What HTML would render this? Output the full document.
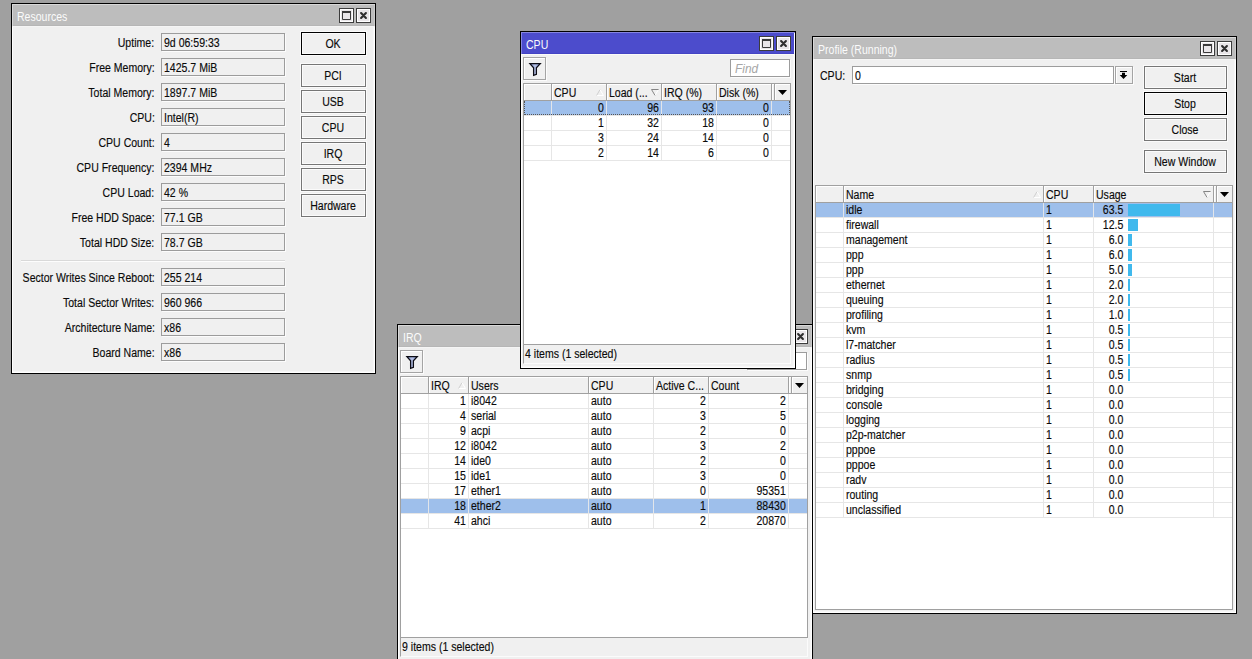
<!DOCTYPE html>
<html><head><meta charset="utf-8"><title>WinBox</title>
<style>
html,body{margin:0;padding:0}
body{width:1252px;height:659px;overflow:hidden;position:relative;background:#a0a0a0;font-family:"Liberation Sans",sans-serif;font-size:12.5px;color:#0a0a0a}
div,span.t,span.cw,svg.abs{position:absolute;box-sizing:border-box}
.t{line-height:15px;white-space:nowrap;transform:scaleX(0.843);-webkit-text-stroke:0.15px currentColor}
.t.l{transform-origin:0 50%}
.t.r{transform-origin:100% 50%}
.cw{width:0;height:15px;display:block}
.cw .t.c{left:0;top:0;transform:translateX(-50%) scaleX(0.843);transform-origin:50% 50%}
.win{background:#f0f0f0;border:1px solid #000;box-shadow:inset 1px 1px 0 #fff,inset -1px -1px 0 #fff,inset -2px -2px 0 #f7f7f7}
.tb.tbi{background:#bdbdbd;box-shadow:inset 1px 1px 0 #d8d8d8,inset -1px 0 0 #cbcbcb,inset 0 -1px 0 #b6b6b6}
.tb.tba{background:#4c4ccc;box-shadow:inset 1px 1px 0 #8585e0,inset -1px 0 0 #fff,inset 0 -1px 0 #4444c4}
.tt{color:#fbfbfb;-webkit-text-stroke:0}
.wb{border:1px solid #3c3c3c;background:#e9e6e9;box-shadow:inset 1px 1px 0 #fff,inset -1px -1px 0 #fff}
.wb svg{position:absolute;left:-1px;top:-1px}
.btn{border:1px solid #767676;background:#f0f0f0;box-shadow:inset 0 0 0 1px #fbfbfb,0 0 0 1px #fafafa}
.btn.def{border-color:#000}
.fld{border:1px solid #9c9c9c;background:#f0f0f0;box-shadow:1px 1px 0 #fcfcfc}
.fld.wh{background:#fff}
.tool{border:1px solid #a4a4a4;background:#f0f0f0;box-shadow:inset 1px 1px 0 #fff,1px 1px 0 #fcfcfc}
.tool svg{position:absolute;left:-1px;top:-1px}
.find{font-style:italic;color:#a6a6a6;-webkit-text-stroke:0}
.tbl{border:1px solid #a0a0a0;background:#fff}
.th{background:#f0f0f0;box-shadow:inset 0 1px 0 #fff,inset 1px 0 0 #fff}
</style></head>
<body>
<div class="win" style="left:11px;top:3px;width:365px;height:371px;"></div>
<div class="tb tbi" style="left:12px;top:4px;width:363px;height:22px;"></div>
<div style="left:12px;top:26px;width:363px;height:1px;background:#f5f5f5"></div>
<span class="t l tt" style="left:16.5px;top:10px;">Resources</span>
<div class="wb" style="left:356px;top:8px;width:15px;height:15px;"><svg width="15" height="15" viewBox="0 0 15 15"><path d="M5.1 5.1 L9.9 9.9 M9.9 5.1 L5.1 9.9" stroke="#2e2e2e" stroke-width="2.15" stroke-linecap="round" fill="none"/></svg></div>
<div class="wb" style="left:339px;top:8px;width:15px;height:15px;"><svg width="15" height="15" viewBox="0 0 15 15"><path d="M3.5 4 H11.5 V11.5 H3.5 Z" stroke="#3a3a3a" stroke-width="1" fill="none"/><rect x="3" y="3" width="9" height="2" fill="#3a3a3a"/></svg></div>
<span class="t r" style="right:1097.5px;top:36px;">Uptime:</span>
<div class="fld" style="left:161px;top:33px;width:124px;height:18px;"></div>
<span class="t l" style="left:164px;top:36px;">9d 06:59:33</span>
<span class="t r" style="right:1097.5px;top:61px;">Free Memory:</span>
<div class="fld" style="left:161px;top:58px;width:124px;height:18px;"></div>
<span class="t l" style="left:164px;top:61px;">1425.7 MiB</span>
<span class="t r" style="right:1097.5px;top:86px;">Total Memory:</span>
<div class="fld" style="left:161px;top:83px;width:124px;height:18px;"></div>
<span class="t l" style="left:164px;top:86px;">1897.7 MiB</span>
<span class="t r" style="right:1097.5px;top:111px;">CPU:</span>
<div class="fld" style="left:161px;top:108px;width:124px;height:18px;"></div>
<span class="t l" style="left:164px;top:111px;">Intel(R)</span>
<span class="t r" style="right:1097.5px;top:136px;">CPU Count:</span>
<div class="fld" style="left:161px;top:133px;width:124px;height:18px;"></div>
<span class="t l" style="left:164px;top:136px;">4</span>
<span class="t r" style="right:1097.5px;top:161px;">CPU Frequency:</span>
<div class="fld" style="left:161px;top:158px;width:124px;height:18px;"></div>
<span class="t l" style="left:164px;top:161px;">2394 MHz</span>
<span class="t r" style="right:1097.5px;top:186px;">CPU Load:</span>
<div class="fld" style="left:161px;top:183px;width:124px;height:18px;"></div>
<span class="t l" style="left:164px;top:186px;">42 %</span>
<span class="t r" style="right:1097.5px;top:211px;">Free HDD Space:</span>
<div class="fld" style="left:161px;top:208px;width:124px;height:18px;"></div>
<span class="t l" style="left:164px;top:211px;">77.1 GB</span>
<span class="t r" style="right:1097.5px;top:236px;">Total HDD Size:</span>
<div class="fld" style="left:161px;top:233px;width:124px;height:18px;"></div>
<span class="t l" style="left:164px;top:236px;">78.7 GB</span>
<div style="left:21px;top:260px;width:264px;height:1px;background:#d9d9d9"></div>
<div style="left:21px;top:261px;width:264px;height:1px;background:#fdfdfd"></div>
<span class="t r" style="right:1097.5px;top:271px;">Sector Writes Since Reboot:</span>
<div class="fld" style="left:161px;top:268px;width:124px;height:18px;"></div>
<span class="t l" style="left:164px;top:271px;">255 214</span>
<span class="t r" style="right:1097.5px;top:296px;">Total Sector Writes:</span>
<div class="fld" style="left:161px;top:293px;width:124px;height:18px;"></div>
<span class="t l" style="left:164px;top:296px;">960 966</span>
<span class="t r" style="right:1097.5px;top:321px;">Architecture Name:</span>
<div class="fld" style="left:161px;top:318px;width:124px;height:18px;"></div>
<span class="t l" style="left:164px;top:321px;">x86</span>
<span class="t r" style="right:1097.5px;top:346px;">Board Name:</span>
<div class="fld" style="left:161px;top:343px;width:124px;height:18px;"></div>
<span class="t l" style="left:164px;top:346px;">x86</span>
<div class="btn def" style="left:301px;top:32px;width:65px;height:23px;"></div>
<span class="cw" style="left:332.8px;top:37px"><span class="t c" style="">OK</span></span>
<div class="btn" style="left:301px;top:64px;width:65px;height:23px;"></div>
<span class="cw" style="left:332.8px;top:69px"><span class="t c" style="">PCI</span></span>
<div class="btn" style="left:301px;top:90px;width:65px;height:23px;"></div>
<span class="cw" style="left:332.8px;top:95px"><span class="t c" style="">USB</span></span>
<div class="btn" style="left:301px;top:116px;width:65px;height:23px;"></div>
<span class="cw" style="left:332.8px;top:121px"><span class="t c" style="">CPU</span></span>
<div class="btn" style="left:301px;top:142px;width:65px;height:23px;"></div>
<span class="cw" style="left:332.8px;top:147px"><span class="t c" style="">IRQ</span></span>
<div class="btn" style="left:301px;top:168px;width:65px;height:23px;"></div>
<span class="cw" style="left:332.8px;top:173px"><span class="t c" style="">RPS</span></span>
<div class="btn" style="left:301px;top:194px;width:65px;height:23px;"></div>
<span class="cw" style="left:332.8px;top:199px"><span class="t c" style="">Hardware</span></span>
<div class="win" style="left:397px;top:324px;width:416px;height:338px;"></div>
<div class="tb tbi" style="left:398px;top:325px;width:414px;height:22px;"></div>
<div style="left:398px;top:347px;width:414px;height:1px;background:#f5f5f5"></div>
<span class="t l tt" style="left:402.5px;top:331px;">IRQ</span>
<div class="wb" style="left:793px;top:329px;width:15px;height:15px;"><svg width="15" height="15" viewBox="0 0 15 15"><path d="M5.1 5.1 L9.9 9.9 M9.9 5.1 L5.1 9.9" stroke="#2e2e2e" stroke-width="2.15" stroke-linecap="round" fill="none"/></svg></div>
<div class="wb" style="left:776px;top:329px;width:15px;height:15px;"><svg width="15" height="15" viewBox="0 0 15 15"><path d="M3.5 4 H11.5 V11.5 H3.5 Z" stroke="#3a3a3a" stroke-width="1" fill="none"/><rect x="3" y="3" width="9" height="2" fill="#3a3a3a"/></svg></div>
<div class="tool" style="left:400px;top:350px;width:23px;height:23px;"><svg width="23" height="23" viewBox="0 0 23 23"><defs><linearGradient id="fg" x1="0" x2="1" y1="0" y2="0"><stop offset="0" stop-color="#7a8cc6"/><stop offset=".5" stop-color="#b6c2e6"/><stop offset="1" stop-color="#8494cc"/></linearGradient></defs><path d="M6.9 6.6 H17.3 L13.4 10.8 V17.3 L10.6 18.4 V10.8 Z" fill="url(#fg)" stroke="#0c0c14" stroke-width="1.25" stroke-linejoin="miter"/></svg></div>
<div class="fld wh" style="left:747px;top:352px;width:60px;height:18px;"></div>
<span class="t l find" style="left:751.8px;top:355px;transform:scaleX(.95)">Find</span>
<div class="tbl" style="left:400px;top:376px;width:408px;height:262px;"></div>
<div class="th" style="left:401px;top:377px;width:406px;height:16px;"></div>
<div style="left:401px;top:393px;width:406px;height:1px;background:#a0a0a0"></div>
<div style="left:428px;top:377px;width:1px;height:16px;background:#a0a0a0"></div>
<div style="left:429px;top:377px;width:1px;height:16px;background:#fff"></div>
<div style="left:468px;top:377px;width:1px;height:16px;background:#a0a0a0"></div>
<div style="left:469px;top:377px;width:1px;height:16px;background:#fff"></div>
<div style="left:588px;top:377px;width:1px;height:16px;background:#a0a0a0"></div>
<div style="left:589px;top:377px;width:1px;height:16px;background:#fff"></div>
<div style="left:653px;top:377px;width:1px;height:16px;background:#a0a0a0"></div>
<div style="left:654px;top:377px;width:1px;height:16px;background:#fff"></div>
<div style="left:708px;top:377px;width:1px;height:16px;background:#a0a0a0"></div>
<div style="left:709px;top:377px;width:1px;height:16px;background:#fff"></div>
<div style="left:788px;top:377px;width:1px;height:16px;background:#a0a0a0"></div>
<div style="left:789px;top:377px;width:1px;height:16px;background:#fff"></div>
<div style="left:791px;top:377px;width:1px;height:16px;background:#a0a0a0"></div>
<div style="left:792px;top:377px;width:1px;height:16px;background:#fff"></div>
<svg class="abs" style="left:794.5px;top:383px" width="9" height="5" viewBox="0 0 9 5"><path d="M0 0 H9 L4.5 5 Z" fill="#000"/></svg>
<span class="t l" style="left:431px;top:379px;">IRQ</span>
<span class="t l" style="left:471px;top:379px;">Users</span>
<span class="t l" style="left:591px;top:379px;">CPU</span>
<span class="t l" style="left:656px;top:379px;">Active C...</span>
<span class="t l" style="left:711px;top:379px;">Count</span>
<svg class="abs" style="left:458px;top:382px" width="8" height="7" viewBox="0 0 8 7"><path d="M4 .6 L7.5 6.5 H.5" fill="none" stroke="#fff" stroke-width="1"/><path d="M4 .6 L.6 6.5" fill="none" stroke="#cfcfcf" stroke-width="1"/></svg>
<div style="left:401px;top:408px;width:406px;height:1px;background:#e6e6e6"></div>
<div style="left:428px;top:394px;width:1px;height:14px;background:#e6e6e6"></div>
<div style="left:468px;top:394px;width:1px;height:14px;background:#e6e6e6"></div>
<div style="left:588px;top:394px;width:1px;height:14px;background:#e6e6e6"></div>
<div style="left:653px;top:394px;width:1px;height:14px;background:#e6e6e6"></div>
<div style="left:708px;top:394px;width:1px;height:14px;background:#e6e6e6"></div>
<div style="left:788px;top:394px;width:1px;height:14px;background:#e6e6e6"></div>
<span class="t r" style="right:786px;top:394px;">1</span>
<span class="t l" style="left:471px;top:394px;">i8042</span>
<span class="t l" style="left:591px;top:394px;">auto</span>
<span class="t r" style="right:546px;top:394px;">2</span>
<span class="t r" style="right:466px;top:394px;">2</span>
<div style="left:401px;top:423px;width:406px;height:1px;background:#e6e6e6"></div>
<div style="left:428px;top:409px;width:1px;height:14px;background:#e6e6e6"></div>
<div style="left:468px;top:409px;width:1px;height:14px;background:#e6e6e6"></div>
<div style="left:588px;top:409px;width:1px;height:14px;background:#e6e6e6"></div>
<div style="left:653px;top:409px;width:1px;height:14px;background:#e6e6e6"></div>
<div style="left:708px;top:409px;width:1px;height:14px;background:#e6e6e6"></div>
<div style="left:788px;top:409px;width:1px;height:14px;background:#e6e6e6"></div>
<span class="t r" style="right:786px;top:409px;">4</span>
<span class="t l" style="left:471px;top:409px;">serial</span>
<span class="t l" style="left:591px;top:409px;">auto</span>
<span class="t r" style="right:546px;top:409px;">3</span>
<span class="t r" style="right:466px;top:409px;">5</span>
<div style="left:401px;top:438px;width:406px;height:1px;background:#e6e6e6"></div>
<div style="left:428px;top:424px;width:1px;height:14px;background:#e6e6e6"></div>
<div style="left:468px;top:424px;width:1px;height:14px;background:#e6e6e6"></div>
<div style="left:588px;top:424px;width:1px;height:14px;background:#e6e6e6"></div>
<div style="left:653px;top:424px;width:1px;height:14px;background:#e6e6e6"></div>
<div style="left:708px;top:424px;width:1px;height:14px;background:#e6e6e6"></div>
<div style="left:788px;top:424px;width:1px;height:14px;background:#e6e6e6"></div>
<span class="t r" style="right:786px;top:424px;">9</span>
<span class="t l" style="left:471px;top:424px;">acpi</span>
<span class="t l" style="left:591px;top:424px;">auto</span>
<span class="t r" style="right:546px;top:424px;">2</span>
<span class="t r" style="right:466px;top:424px;">0</span>
<div style="left:401px;top:453px;width:406px;height:1px;background:#e6e6e6"></div>
<div style="left:428px;top:439px;width:1px;height:14px;background:#e6e6e6"></div>
<div style="left:468px;top:439px;width:1px;height:14px;background:#e6e6e6"></div>
<div style="left:588px;top:439px;width:1px;height:14px;background:#e6e6e6"></div>
<div style="left:653px;top:439px;width:1px;height:14px;background:#e6e6e6"></div>
<div style="left:708px;top:439px;width:1px;height:14px;background:#e6e6e6"></div>
<div style="left:788px;top:439px;width:1px;height:14px;background:#e6e6e6"></div>
<span class="t r" style="right:786px;top:439px;">12</span>
<span class="t l" style="left:471px;top:439px;">i8042</span>
<span class="t l" style="left:591px;top:439px;">auto</span>
<span class="t r" style="right:546px;top:439px;">3</span>
<span class="t r" style="right:466px;top:439px;">2</span>
<div style="left:401px;top:468px;width:406px;height:1px;background:#e6e6e6"></div>
<div style="left:428px;top:454px;width:1px;height:14px;background:#e6e6e6"></div>
<div style="left:468px;top:454px;width:1px;height:14px;background:#e6e6e6"></div>
<div style="left:588px;top:454px;width:1px;height:14px;background:#e6e6e6"></div>
<div style="left:653px;top:454px;width:1px;height:14px;background:#e6e6e6"></div>
<div style="left:708px;top:454px;width:1px;height:14px;background:#e6e6e6"></div>
<div style="left:788px;top:454px;width:1px;height:14px;background:#e6e6e6"></div>
<span class="t r" style="right:786px;top:454px;">14</span>
<span class="t l" style="left:471px;top:454px;">ide0</span>
<span class="t l" style="left:591px;top:454px;">auto</span>
<span class="t r" style="right:546px;top:454px;">2</span>
<span class="t r" style="right:466px;top:454px;">0</span>
<div style="left:401px;top:483px;width:406px;height:1px;background:#e6e6e6"></div>
<div style="left:428px;top:469px;width:1px;height:14px;background:#e6e6e6"></div>
<div style="left:468px;top:469px;width:1px;height:14px;background:#e6e6e6"></div>
<div style="left:588px;top:469px;width:1px;height:14px;background:#e6e6e6"></div>
<div style="left:653px;top:469px;width:1px;height:14px;background:#e6e6e6"></div>
<div style="left:708px;top:469px;width:1px;height:14px;background:#e6e6e6"></div>
<div style="left:788px;top:469px;width:1px;height:14px;background:#e6e6e6"></div>
<span class="t r" style="right:786px;top:469px;">15</span>
<span class="t l" style="left:471px;top:469px;">ide1</span>
<span class="t l" style="left:591px;top:469px;">auto</span>
<span class="t r" style="right:546px;top:469px;">3</span>
<span class="t r" style="right:466px;top:469px;">0</span>
<div style="left:401px;top:498px;width:406px;height:1px;background:#e6e6e6"></div>
<div style="left:428px;top:484px;width:1px;height:14px;background:#e6e6e6"></div>
<div style="left:468px;top:484px;width:1px;height:14px;background:#e6e6e6"></div>
<div style="left:588px;top:484px;width:1px;height:14px;background:#e6e6e6"></div>
<div style="left:653px;top:484px;width:1px;height:14px;background:#e6e6e6"></div>
<div style="left:708px;top:484px;width:1px;height:14px;background:#e6e6e6"></div>
<div style="left:788px;top:484px;width:1px;height:14px;background:#e6e6e6"></div>
<span class="t r" style="right:786px;top:484px;">17</span>
<span class="t l" style="left:471px;top:484px;">ether1</span>
<span class="t l" style="left:591px;top:484px;">auto</span>
<span class="t r" style="right:546px;top:484px;">0</span>
<span class="t r" style="right:466px;top:484px;">95351</span>
<div style="left:401px;top:499px;width:406px;height:14px;background:#9ebfeb"></div>
<div style="left:401px;top:513px;width:406px;height:1px;background:#e6e6e6"></div>
<div style="left:428px;top:499px;width:1px;height:14px;background:#e2e5ea"></div>
<div style="left:468px;top:499px;width:1px;height:14px;background:#e2e5ea"></div>
<div style="left:588px;top:499px;width:1px;height:14px;background:#e2e5ea"></div>
<div style="left:653px;top:499px;width:1px;height:14px;background:#e2e5ea"></div>
<div style="left:708px;top:499px;width:1px;height:14px;background:#e2e5ea"></div>
<div style="left:788px;top:499px;width:1px;height:14px;background:#e2e5ea"></div>
<span class="t r" style="right:786px;top:499px;">18</span>
<span class="t l" style="left:471px;top:499px;">ether2</span>
<span class="t l" style="left:591px;top:499px;">auto</span>
<span class="t r" style="right:546px;top:499px;">1</span>
<span class="t r" style="right:466px;top:499px;">88430</span>
<div style="left:401px;top:528px;width:406px;height:1px;background:#e6e6e6"></div>
<div style="left:428px;top:514px;width:1px;height:14px;background:#e6e6e6"></div>
<div style="left:468px;top:514px;width:1px;height:14px;background:#e6e6e6"></div>
<div style="left:588px;top:514px;width:1px;height:14px;background:#e6e6e6"></div>
<div style="left:653px;top:514px;width:1px;height:14px;background:#e6e6e6"></div>
<div style="left:708px;top:514px;width:1px;height:14px;background:#e6e6e6"></div>
<div style="left:788px;top:514px;width:1px;height:14px;background:#e6e6e6"></div>
<span class="t r" style="right:786px;top:514px;">41</span>
<span class="t l" style="left:471px;top:514px;">ahci</span>
<span class="t l" style="left:591px;top:514px;">auto</span>
<span class="t r" style="right:546px;top:514px;">2</span>
<span class="t r" style="right:466px;top:514px;">20870</span>
<div style="left:400px;top:638px;width:408px;height:19px;border-left:1px solid #a0a0a0;border-right:1px solid #fbfbfb;border-bottom:1px solid #fbfbfb"></div>
<span class="t l" style="left:402px;top:640px;">9 items (1 selected)</span>
<div class="win" style="left:812px;top:36px;width:425px;height:578px;"></div>
<div class="tb tbi" style="left:813px;top:37px;width:423px;height:22px;"></div>
<div style="left:813px;top:59px;width:423px;height:1px;background:#f5f5f5"></div>
<span class="t l tt" style="left:817.5px;top:43px;">Profile (Running)</span>
<div class="wb" style="left:1217px;top:41px;width:15px;height:15px;"><svg width="15" height="15" viewBox="0 0 15 15"><path d="M5.1 5.1 L9.9 9.9 M9.9 5.1 L5.1 9.9" stroke="#2e2e2e" stroke-width="2.15" stroke-linecap="round" fill="none"/></svg></div>
<div class="wb" style="left:1200px;top:41px;width:15px;height:15px;"><svg width="15" height="15" viewBox="0 0 15 15"><path d="M3.5 4 H11.5 V11.5 H3.5 Z" stroke="#3a3a3a" stroke-width="1" fill="none"/><rect x="3" y="3" width="9" height="2" fill="#3a3a3a"/></svg></div>
<span class="t l" style="left:820px;top:69px;">CPU:</span>
<div class="fld wh" style="left:852px;top:66px;width:262px;height:18px;"></div>
<span class="t l" style="left:855px;top:69px;">0</span>
<div class="tool" style="left:1115px;top:66px;width:18px;height:18px;"><svg width="18" height="18" viewBox="0 0 18 18"><rect x="5" y="5" width="7" height="1" fill="#000"/><path d="M7 6.7 H10 V9 H12.3 L8.5 13 L4.7 9 H7 Z" fill="#000"/></svg></div>
<div class="btn" style="left:1144px;top:66px;width:83px;height:23px;"></div>
<span class="cw" style="left:1184.8px;top:71px"><span class="t c" style="">Start</span></span>
<div class="btn def" style="left:1144px;top:92px;width:83px;height:23px;"></div>
<span class="cw" style="left:1184.8px;top:97px"><span class="t c" style="">Stop</span></span>
<div class="btn" style="left:1144px;top:118px;width:83px;height:23px;"></div>
<span class="cw" style="left:1184.8px;top:123px"><span class="t c" style="">Close</span></span>
<div class="btn" style="left:1144px;top:150px;width:83px;height:23px;"></div>
<span class="cw" style="left:1184.8px;top:155px"><span class="t c" style="">New Window</span></span>
<div class="tbl" style="left:815px;top:185px;width:418px;height:425px;"></div>
<div class="th" style="left:816px;top:186px;width:416px;height:16px;"></div>
<div style="left:816px;top:202px;width:416px;height:1px;background:#a0a0a0"></div>
<div style="left:843px;top:186px;width:1px;height:16px;background:#a0a0a0"></div>
<div style="left:844px;top:186px;width:1px;height:16px;background:#fff"></div>
<div style="left:1043px;top:186px;width:1px;height:16px;background:#a0a0a0"></div>
<div style="left:1044px;top:186px;width:1px;height:16px;background:#fff"></div>
<div style="left:1093px;top:186px;width:1px;height:16px;background:#a0a0a0"></div>
<div style="left:1094px;top:186px;width:1px;height:16px;background:#fff"></div>
<div style="left:1213px;top:186px;width:1px;height:16px;background:#a0a0a0"></div>
<div style="left:1214px;top:186px;width:1px;height:16px;background:#fff"></div>
<div style="left:1216px;top:186px;width:1px;height:16px;background:#a0a0a0"></div>
<div style="left:1217px;top:186px;width:1px;height:16px;background:#fff"></div>
<svg class="abs" style="left:1219.5px;top:192px" width="9" height="5" viewBox="0 0 9 5"><path d="M0 0 H9 L4.5 5 Z" fill="#000"/></svg>
<span class="t l" style="left:846px;top:188px;">Name</span>
<span class="t l" style="left:1046px;top:188px;">CPU</span>
<span class="t l" style="left:1096px;top:188px;">Usage</span>
<svg class="abs" style="left:1033px;top:191px" width="8" height="7" viewBox="0 0 8 7"><path d="M4 .6 L7.5 6.5 H.5" fill="none" stroke="#fff" stroke-width="1"/><path d="M4 .6 L.6 6.5" fill="none" stroke="#cfcfcf" stroke-width="1"/></svg>
<svg class="abs" style="left:1203px;top:191px" width="8" height="7" viewBox="0 0 8 7"><path d="M7.5 .5 L4 6.4" fill="none" stroke="#fff" stroke-width="1"/><path d="M7.6 .5 H.5 L4 6.4" fill="none" stroke="#858585" stroke-width="1"/></svg>
<div style="left:816px;top:203px;width:416px;height:14px;background:#9ebfeb"></div>
<div style="left:816px;top:217px;width:416px;height:1px;background:#e6e6e6"></div>
<div style="left:843px;top:203px;width:1px;height:14px;background:#e2e5ea"></div>
<div style="left:1043px;top:203px;width:1px;height:14px;background:#e2e5ea"></div>
<div style="left:1093px;top:203px;width:1px;height:14px;background:#e2e5ea"></div>
<div style="left:1213px;top:203px;width:1px;height:14px;background:#e2e5ea"></div>
<span class="t l" style="left:846px;top:203px;">idle</span>
<span class="t l" style="left:1046px;top:203px;">1</span>
<span class="t r" style="right:129px;top:203px;">63.5</span>
<div style="left:1128px;top:204px;width:52px;height:12px;background:#40b9ed"></div>
<div style="left:816px;top:232px;width:416px;height:1px;background:#e6e6e6"></div>
<div style="left:843px;top:218px;width:1px;height:14px;background:#e6e6e6"></div>
<div style="left:1043px;top:218px;width:1px;height:14px;background:#e6e6e6"></div>
<div style="left:1093px;top:218px;width:1px;height:14px;background:#e6e6e6"></div>
<div style="left:1213px;top:218px;width:1px;height:14px;background:#e6e6e6"></div>
<span class="t l" style="left:846px;top:218px;">firewall</span>
<span class="t l" style="left:1046px;top:218px;">1</span>
<span class="t r" style="right:129px;top:218px;">12.5</span>
<div style="left:1128px;top:219px;width:10px;height:12px;background:#40b9ed"></div>
<div style="left:816px;top:247px;width:416px;height:1px;background:#e6e6e6"></div>
<div style="left:843px;top:233px;width:1px;height:14px;background:#e6e6e6"></div>
<div style="left:1043px;top:233px;width:1px;height:14px;background:#e6e6e6"></div>
<div style="left:1093px;top:233px;width:1px;height:14px;background:#e6e6e6"></div>
<div style="left:1213px;top:233px;width:1px;height:14px;background:#e6e6e6"></div>
<span class="t l" style="left:846px;top:233px;">management</span>
<span class="t l" style="left:1046px;top:233px;">1</span>
<span class="t r" style="right:129px;top:233px;">6.0</span>
<div style="left:1128px;top:234px;width:4px;height:12px;background:#40b9ed"></div>
<div style="left:816px;top:262px;width:416px;height:1px;background:#e6e6e6"></div>
<div style="left:843px;top:248px;width:1px;height:14px;background:#e6e6e6"></div>
<div style="left:1043px;top:248px;width:1px;height:14px;background:#e6e6e6"></div>
<div style="left:1093px;top:248px;width:1px;height:14px;background:#e6e6e6"></div>
<div style="left:1213px;top:248px;width:1px;height:14px;background:#e6e6e6"></div>
<span class="t l" style="left:846px;top:248px;">ppp</span>
<span class="t l" style="left:1046px;top:248px;">1</span>
<span class="t r" style="right:129px;top:248px;">6.0</span>
<div style="left:1128px;top:249px;width:4px;height:12px;background:#40b9ed"></div>
<div style="left:816px;top:277px;width:416px;height:1px;background:#e6e6e6"></div>
<div style="left:843px;top:263px;width:1px;height:14px;background:#e6e6e6"></div>
<div style="left:1043px;top:263px;width:1px;height:14px;background:#e6e6e6"></div>
<div style="left:1093px;top:263px;width:1px;height:14px;background:#e6e6e6"></div>
<div style="left:1213px;top:263px;width:1px;height:14px;background:#e6e6e6"></div>
<span class="t l" style="left:846px;top:263px;">ppp</span>
<span class="t l" style="left:1046px;top:263px;">1</span>
<span class="t r" style="right:129px;top:263px;">5.0</span>
<div style="left:1128px;top:264px;width:4px;height:12px;background:#40b9ed"></div>
<div style="left:816px;top:292px;width:416px;height:1px;background:#e6e6e6"></div>
<div style="left:843px;top:278px;width:1px;height:14px;background:#e6e6e6"></div>
<div style="left:1043px;top:278px;width:1px;height:14px;background:#e6e6e6"></div>
<div style="left:1093px;top:278px;width:1px;height:14px;background:#e6e6e6"></div>
<div style="left:1213px;top:278px;width:1px;height:14px;background:#e6e6e6"></div>
<span class="t l" style="left:846px;top:278px;">ethernet</span>
<span class="t l" style="left:1046px;top:278px;">1</span>
<span class="t r" style="right:129px;top:278px;">2.0</span>
<div style="left:1128px;top:279px;width:2px;height:12px;background:#40b9ed"></div>
<div style="left:816px;top:307px;width:416px;height:1px;background:#e6e6e6"></div>
<div style="left:843px;top:293px;width:1px;height:14px;background:#e6e6e6"></div>
<div style="left:1043px;top:293px;width:1px;height:14px;background:#e6e6e6"></div>
<div style="left:1093px;top:293px;width:1px;height:14px;background:#e6e6e6"></div>
<div style="left:1213px;top:293px;width:1px;height:14px;background:#e6e6e6"></div>
<span class="t l" style="left:846px;top:293px;">queuing</span>
<span class="t l" style="left:1046px;top:293px;">1</span>
<span class="t r" style="right:129px;top:293px;">2.0</span>
<div style="left:1128px;top:294px;width:2px;height:12px;background:#40b9ed"></div>
<div style="left:816px;top:322px;width:416px;height:1px;background:#e6e6e6"></div>
<div style="left:843px;top:308px;width:1px;height:14px;background:#e6e6e6"></div>
<div style="left:1043px;top:308px;width:1px;height:14px;background:#e6e6e6"></div>
<div style="left:1093px;top:308px;width:1px;height:14px;background:#e6e6e6"></div>
<div style="left:1213px;top:308px;width:1px;height:14px;background:#e6e6e6"></div>
<span class="t l" style="left:846px;top:308px;">profiling</span>
<span class="t l" style="left:1046px;top:308px;">1</span>
<span class="t r" style="right:129px;top:308px;">1.0</span>
<div style="left:1128px;top:309px;width:2px;height:12px;background:#40b9ed"></div>
<div style="left:816px;top:337px;width:416px;height:1px;background:#e6e6e6"></div>
<div style="left:843px;top:323px;width:1px;height:14px;background:#e6e6e6"></div>
<div style="left:1043px;top:323px;width:1px;height:14px;background:#e6e6e6"></div>
<div style="left:1093px;top:323px;width:1px;height:14px;background:#e6e6e6"></div>
<div style="left:1213px;top:323px;width:1px;height:14px;background:#e6e6e6"></div>
<span class="t l" style="left:846px;top:323px;">kvm</span>
<span class="t l" style="left:1046px;top:323px;">1</span>
<span class="t r" style="right:129px;top:323px;">0.5</span>
<div style="left:1128px;top:324px;width:2px;height:12px;background:#40b9ed"></div>
<div style="left:816px;top:352px;width:416px;height:1px;background:#e6e6e6"></div>
<div style="left:843px;top:338px;width:1px;height:14px;background:#e6e6e6"></div>
<div style="left:1043px;top:338px;width:1px;height:14px;background:#e6e6e6"></div>
<div style="left:1093px;top:338px;width:1px;height:14px;background:#e6e6e6"></div>
<div style="left:1213px;top:338px;width:1px;height:14px;background:#e6e6e6"></div>
<span class="t l" style="left:846px;top:338px;">l7-matcher</span>
<span class="t l" style="left:1046px;top:338px;">1</span>
<span class="t r" style="right:129px;top:338px;">0.5</span>
<div style="left:1128px;top:339px;width:2px;height:12px;background:#40b9ed"></div>
<div style="left:816px;top:367px;width:416px;height:1px;background:#e6e6e6"></div>
<div style="left:843px;top:353px;width:1px;height:14px;background:#e6e6e6"></div>
<div style="left:1043px;top:353px;width:1px;height:14px;background:#e6e6e6"></div>
<div style="left:1093px;top:353px;width:1px;height:14px;background:#e6e6e6"></div>
<div style="left:1213px;top:353px;width:1px;height:14px;background:#e6e6e6"></div>
<span class="t l" style="left:846px;top:353px;">radius</span>
<span class="t l" style="left:1046px;top:353px;">1</span>
<span class="t r" style="right:129px;top:353px;">0.5</span>
<div style="left:1128px;top:354px;width:2px;height:12px;background:#40b9ed"></div>
<div style="left:816px;top:382px;width:416px;height:1px;background:#e6e6e6"></div>
<div style="left:843px;top:368px;width:1px;height:14px;background:#e6e6e6"></div>
<div style="left:1043px;top:368px;width:1px;height:14px;background:#e6e6e6"></div>
<div style="left:1093px;top:368px;width:1px;height:14px;background:#e6e6e6"></div>
<div style="left:1213px;top:368px;width:1px;height:14px;background:#e6e6e6"></div>
<span class="t l" style="left:846px;top:368px;">snmp</span>
<span class="t l" style="left:1046px;top:368px;">1</span>
<span class="t r" style="right:129px;top:368px;">0.5</span>
<div style="left:1128px;top:369px;width:2px;height:12px;background:#40b9ed"></div>
<div style="left:816px;top:397px;width:416px;height:1px;background:#e6e6e6"></div>
<div style="left:843px;top:383px;width:1px;height:14px;background:#e6e6e6"></div>
<div style="left:1043px;top:383px;width:1px;height:14px;background:#e6e6e6"></div>
<div style="left:1093px;top:383px;width:1px;height:14px;background:#e6e6e6"></div>
<div style="left:1213px;top:383px;width:1px;height:14px;background:#e6e6e6"></div>
<span class="t l" style="left:846px;top:383px;">bridging</span>
<span class="t l" style="left:1046px;top:383px;">1</span>
<span class="t r" style="right:129px;top:383px;">0.0</span>
<div style="left:816px;top:412px;width:416px;height:1px;background:#e6e6e6"></div>
<div style="left:843px;top:398px;width:1px;height:14px;background:#e6e6e6"></div>
<div style="left:1043px;top:398px;width:1px;height:14px;background:#e6e6e6"></div>
<div style="left:1093px;top:398px;width:1px;height:14px;background:#e6e6e6"></div>
<div style="left:1213px;top:398px;width:1px;height:14px;background:#e6e6e6"></div>
<span class="t l" style="left:846px;top:398px;">console</span>
<span class="t l" style="left:1046px;top:398px;">1</span>
<span class="t r" style="right:129px;top:398px;">0.0</span>
<div style="left:816px;top:427px;width:416px;height:1px;background:#e6e6e6"></div>
<div style="left:843px;top:413px;width:1px;height:14px;background:#e6e6e6"></div>
<div style="left:1043px;top:413px;width:1px;height:14px;background:#e6e6e6"></div>
<div style="left:1093px;top:413px;width:1px;height:14px;background:#e6e6e6"></div>
<div style="left:1213px;top:413px;width:1px;height:14px;background:#e6e6e6"></div>
<span class="t l" style="left:846px;top:413px;">logging</span>
<span class="t l" style="left:1046px;top:413px;">1</span>
<span class="t r" style="right:129px;top:413px;">0.0</span>
<div style="left:816px;top:442px;width:416px;height:1px;background:#e6e6e6"></div>
<div style="left:843px;top:428px;width:1px;height:14px;background:#e6e6e6"></div>
<div style="left:1043px;top:428px;width:1px;height:14px;background:#e6e6e6"></div>
<div style="left:1093px;top:428px;width:1px;height:14px;background:#e6e6e6"></div>
<div style="left:1213px;top:428px;width:1px;height:14px;background:#e6e6e6"></div>
<span class="t l" style="left:846px;top:428px;">p2p-matcher</span>
<span class="t l" style="left:1046px;top:428px;">1</span>
<span class="t r" style="right:129px;top:428px;">0.0</span>
<div style="left:816px;top:457px;width:416px;height:1px;background:#e6e6e6"></div>
<div style="left:843px;top:443px;width:1px;height:14px;background:#e6e6e6"></div>
<div style="left:1043px;top:443px;width:1px;height:14px;background:#e6e6e6"></div>
<div style="left:1093px;top:443px;width:1px;height:14px;background:#e6e6e6"></div>
<div style="left:1213px;top:443px;width:1px;height:14px;background:#e6e6e6"></div>
<span class="t l" style="left:846px;top:443px;">pppoe</span>
<span class="t l" style="left:1046px;top:443px;">1</span>
<span class="t r" style="right:129px;top:443px;">0.0</span>
<div style="left:816px;top:472px;width:416px;height:1px;background:#e6e6e6"></div>
<div style="left:843px;top:458px;width:1px;height:14px;background:#e6e6e6"></div>
<div style="left:1043px;top:458px;width:1px;height:14px;background:#e6e6e6"></div>
<div style="left:1093px;top:458px;width:1px;height:14px;background:#e6e6e6"></div>
<div style="left:1213px;top:458px;width:1px;height:14px;background:#e6e6e6"></div>
<span class="t l" style="left:846px;top:458px;">pppoe</span>
<span class="t l" style="left:1046px;top:458px;">1</span>
<span class="t r" style="right:129px;top:458px;">0.0</span>
<div style="left:816px;top:487px;width:416px;height:1px;background:#e6e6e6"></div>
<div style="left:843px;top:473px;width:1px;height:14px;background:#e6e6e6"></div>
<div style="left:1043px;top:473px;width:1px;height:14px;background:#e6e6e6"></div>
<div style="left:1093px;top:473px;width:1px;height:14px;background:#e6e6e6"></div>
<div style="left:1213px;top:473px;width:1px;height:14px;background:#e6e6e6"></div>
<span class="t l" style="left:846px;top:473px;">radv</span>
<span class="t l" style="left:1046px;top:473px;">1</span>
<span class="t r" style="right:129px;top:473px;">0.0</span>
<div style="left:816px;top:502px;width:416px;height:1px;background:#e6e6e6"></div>
<div style="left:843px;top:488px;width:1px;height:14px;background:#e6e6e6"></div>
<div style="left:1043px;top:488px;width:1px;height:14px;background:#e6e6e6"></div>
<div style="left:1093px;top:488px;width:1px;height:14px;background:#e6e6e6"></div>
<div style="left:1213px;top:488px;width:1px;height:14px;background:#e6e6e6"></div>
<span class="t l" style="left:846px;top:488px;">routing</span>
<span class="t l" style="left:1046px;top:488px;">1</span>
<span class="t r" style="right:129px;top:488px;">0.0</span>
<div style="left:816px;top:517px;width:416px;height:1px;background:#e6e6e6"></div>
<div style="left:843px;top:503px;width:1px;height:14px;background:#e6e6e6"></div>
<div style="left:1043px;top:503px;width:1px;height:14px;background:#e6e6e6"></div>
<div style="left:1093px;top:503px;width:1px;height:14px;background:#e6e6e6"></div>
<div style="left:1213px;top:503px;width:1px;height:14px;background:#e6e6e6"></div>
<span class="t l" style="left:846px;top:503px;">unclassified</span>
<span class="t l" style="left:1046px;top:503px;">1</span>
<span class="t r" style="right:129px;top:503px;">0.0</span>
<div class="win" style="left:520px;top:31px;width:276px;height:338px;"></div>
<div class="tb tba" style="left:521px;top:32px;width:274px;height:22px;"></div>
<div style="left:521px;top:54px;width:274px;height:1px;background:#fafaf8"></div>
<span class="t l tt" style="left:525.5px;top:38px;">CPU</span>
<div class="wb" style="left:776px;top:36px;width:15px;height:15px;"><svg width="15" height="15" viewBox="0 0 15 15"><path d="M5.1 5.1 L9.9 9.9 M9.9 5.1 L5.1 9.9" stroke="#2e2e2e" stroke-width="2.15" stroke-linecap="round" fill="none"/></svg></div>
<div class="wb" style="left:759px;top:36px;width:15px;height:15px;"><svg width="15" height="15" viewBox="0 0 15 15"><path d="M3.5 4 H11.5 V11.5 H3.5 Z" stroke="#3a3a3a" stroke-width="1" fill="none"/><rect x="3" y="3" width="9" height="2" fill="#3a3a3a"/></svg></div>
<div class="tool" style="left:523px;top:57px;width:23px;height:23px;"><svg width="23" height="23" viewBox="0 0 23 23"><defs><linearGradient id="fg" x1="0" x2="1" y1="0" y2="0"><stop offset="0" stop-color="#7a8cc6"/><stop offset=".5" stop-color="#b6c2e6"/><stop offset="1" stop-color="#8494cc"/></linearGradient></defs><path d="M6.9 6.6 H17.3 L13.4 10.8 V17.3 L10.6 18.4 V10.8 Z" fill="url(#fg)" stroke="#0c0c14" stroke-width="1.25" stroke-linejoin="miter"/></svg></div>
<div class="fld wh" style="left:730px;top:59px;width:60px;height:18px;"></div>
<span class="t l find" style="left:734.8px;top:62px;transform:scaleX(.95)">Find</span>
<div class="tbl" style="left:523px;top:83px;width:268px;height:262px;"></div>
<div class="th" style="left:524px;top:84px;width:266px;height:16px;"></div>
<div style="left:524px;top:100px;width:266px;height:1px;background:#a0a0a0"></div>
<div style="left:551px;top:84px;width:1px;height:16px;background:#a0a0a0"></div>
<div style="left:552px;top:84px;width:1px;height:16px;background:#fff"></div>
<div style="left:606px;top:84px;width:1px;height:16px;background:#a0a0a0"></div>
<div style="left:607px;top:84px;width:1px;height:16px;background:#fff"></div>
<div style="left:661px;top:84px;width:1px;height:16px;background:#a0a0a0"></div>
<div style="left:662px;top:84px;width:1px;height:16px;background:#fff"></div>
<div style="left:716px;top:84px;width:1px;height:16px;background:#a0a0a0"></div>
<div style="left:717px;top:84px;width:1px;height:16px;background:#fff"></div>
<div style="left:771px;top:84px;width:1px;height:16px;background:#a0a0a0"></div>
<div style="left:772px;top:84px;width:1px;height:16px;background:#fff"></div>
<div style="left:774px;top:84px;width:1px;height:16px;background:#a0a0a0"></div>
<div style="left:775px;top:84px;width:1px;height:16px;background:#fff"></div>
<svg class="abs" style="left:777.5px;top:90px" width="9" height="5" viewBox="0 0 9 5"><path d="M0 0 H9 L4.5 5 Z" fill="#000"/></svg>
<span class="t l" style="left:554px;top:86px;">CPU</span>
<span class="t l" style="left:609px;top:86px;">Load (...</span>
<span class="t l" style="left:664px;top:86px;">IRQ (%)</span>
<span class="t l" style="left:719px;top:86px;">Disk (%)</span>
<svg class="abs" style="left:596px;top:89px" width="8" height="7" viewBox="0 0 8 7"><path d="M4 .6 L7.5 6.5 H.5" fill="none" stroke="#fff" stroke-width="1"/><path d="M4 .6 L.6 6.5" fill="none" stroke="#cfcfcf" stroke-width="1"/></svg>
<svg class="abs" style="left:651px;top:89px" width="8" height="7" viewBox="0 0 8 7"><path d="M7.5 .5 L4 6.4" fill="none" stroke="#fff" stroke-width="1"/><path d="M7.6 .5 H.5 L4 6.4" fill="none" stroke="#858585" stroke-width="1"/></svg>
<div style="left:524px;top:101px;width:266px;height:14px;background:#9ebfeb"></div>
<div style="left:524px;top:115px;width:266px;height:1px;background:#e6e6e6"></div>
<div style="left:551px;top:101px;width:1px;height:14px;background:#e2e5ea"></div>
<div style="left:606px;top:101px;width:1px;height:14px;background:#e2e5ea"></div>
<div style="left:661px;top:101px;width:1px;height:14px;background:#e2e5ea"></div>
<div style="left:716px;top:101px;width:1px;height:14px;background:#e2e5ea"></div>
<div style="left:771px;top:101px;width:1px;height:14px;background:#e2e5ea"></div>
<div style="left:524px;top:101px;width:266px;height:14px;border:1px dotted #555;border-top:none"></div>
<span class="t r" style="right:648px;top:101px;">0</span>
<span class="t r" style="right:593px;top:101px;">96</span>
<span class="t r" style="right:538px;top:101px;">93</span>
<span class="t r" style="right:483px;top:101px;">0</span>
<div style="left:524px;top:130px;width:266px;height:1px;background:#e6e6e6"></div>
<div style="left:551px;top:116px;width:1px;height:14px;background:#e6e6e6"></div>
<div style="left:606px;top:116px;width:1px;height:14px;background:#e6e6e6"></div>
<div style="left:661px;top:116px;width:1px;height:14px;background:#e6e6e6"></div>
<div style="left:716px;top:116px;width:1px;height:14px;background:#e6e6e6"></div>
<div style="left:771px;top:116px;width:1px;height:14px;background:#e6e6e6"></div>
<span class="t r" style="right:648px;top:116px;">1</span>
<span class="t r" style="right:593px;top:116px;">32</span>
<span class="t r" style="right:538px;top:116px;">18</span>
<span class="t r" style="right:483px;top:116px;">0</span>
<div style="left:524px;top:145px;width:266px;height:1px;background:#e6e6e6"></div>
<div style="left:551px;top:131px;width:1px;height:14px;background:#e6e6e6"></div>
<div style="left:606px;top:131px;width:1px;height:14px;background:#e6e6e6"></div>
<div style="left:661px;top:131px;width:1px;height:14px;background:#e6e6e6"></div>
<div style="left:716px;top:131px;width:1px;height:14px;background:#e6e6e6"></div>
<div style="left:771px;top:131px;width:1px;height:14px;background:#e6e6e6"></div>
<span class="t r" style="right:648px;top:131px;">3</span>
<span class="t r" style="right:593px;top:131px;">24</span>
<span class="t r" style="right:538px;top:131px;">14</span>
<span class="t r" style="right:483px;top:131px;">0</span>
<div style="left:524px;top:160px;width:266px;height:1px;background:#e6e6e6"></div>
<div style="left:551px;top:146px;width:1px;height:14px;background:#e6e6e6"></div>
<div style="left:606px;top:146px;width:1px;height:14px;background:#e6e6e6"></div>
<div style="left:661px;top:146px;width:1px;height:14px;background:#e6e6e6"></div>
<div style="left:716px;top:146px;width:1px;height:14px;background:#e6e6e6"></div>
<div style="left:771px;top:146px;width:1px;height:14px;background:#e6e6e6"></div>
<span class="t r" style="right:648px;top:146px;">2</span>
<span class="t r" style="right:593px;top:146px;">14</span>
<span class="t r" style="right:538px;top:146px;">6</span>
<span class="t r" style="right:483px;top:146px;">0</span>
<div style="left:523px;top:345px;width:268px;height:19px;border-left:1px solid #a0a0a0;border-right:1px solid #fbfbfb;border-bottom:1px solid #fbfbfb"></div>
<span class="t l" style="left:525px;top:347px;">4 items (1 selected)</span>
</body></html>
